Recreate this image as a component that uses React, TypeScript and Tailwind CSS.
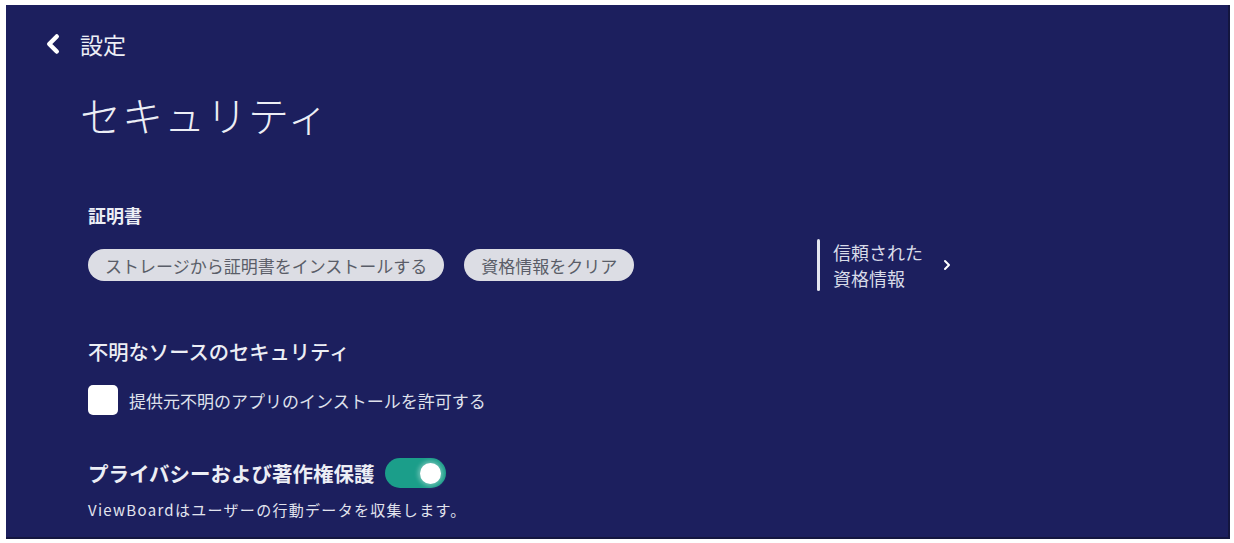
import { ChevronLeft, ChevronRight } from 'lucide-react'

const font = { fontFamily: '"Noto Sans CJK JP", "Noto Sans", sans-serif' }

function Pill({ label }: { label: string }) {
  return (
    <button className="h-[32px] px-[17px] rounded-full bg-[#dcdde4] text-[#5a5d68] text-[17px] leading-none">
      {label}
    </button>
  )
}

export default function App() {
  return (
    <div className="w-[1234px] h-[543px] bg-white pt-[5px] pl-[6px] pr-[4px] pb-[4px]" style={font}>
      <div className="w-full h-full bg-[#1c1f5e] text-[#eceef5] shadow-[inset_-2px_-2px_0_#14163f] overflow-hidden">
        {/* header */}
        <div className="flex items-center pt-[24px] pl-[32px]">
          <ChevronLeft className="w-[30px] h-[30px] text-white" strokeWidth={3.6} />
          <span className="ml-[12px] text-[23px] leading-none">設定</span>
        </div>
        <h1 className="mt-[35px] ml-[74px] text-[41px] leading-none font-light tracking-[1px]">セキュリティ</h1>

        <div className="pl-[82px]">
          {/* certificates */}
          <div className="mt-[71px] text-[18px] leading-none font-bold">証明書</div>
          <div className="mt-[15px] flex items-center">
            <div className="w-[729px] flex items-center gap-[20px]">
              <Pill label="ストレージから証明書をインストールする" />
              <Pill label="資格情報をクリア" />
            </div>
            <div className="flex items-center">
              <div className="w-[3px] h-[52px] bg-[#e4e6f0] rounded-full" />
              <div className="ml-[13px] text-[18px] leading-[26px] text-[#d8dbe8]">
                <div>信頼された</div>
                <div>資格情報</div>
              </div>
              <ChevronRight className="ml-[16px] w-[16px] h-[16px] text-white" strokeWidth={3} />
            </div>
          </div>

          {/* unknown sources */}
          <div className="mt-[50px] text-[20.3px] leading-none font-medium">不明なソースのセキュリティ</div>
          <label className="mt-[24px] flex items-center">
            <span className="w-[30px] h-[30px] rounded-[5px] bg-white" />
            <span className="ml-[11px] text-[17px] leading-none text-[#dfe1ec]">提供元不明のアプリのインストールを許可する</span>
          </label>

          {/* privacy */}
          <div className="mt-[43px] flex items-center">
            <span className="text-[20.5px] leading-none font-bold">プライバシーおよび著作権保護</span>
            <span className="ml-[10px] w-[61px] h-[30px] rounded-full bg-[#1b9e8a] flex items-center justify-end pr-[5px]">
              <span className="w-[21px] h-[21px] rounded-full bg-white shadow-[0_0_4px_2px_rgba(255,255,255,0.35)]" />
            </span>
          </div>
          <div className="mt-[14px] text-[15px] leading-none tracking-[1.3px] text-[#e2e4ee]">ViewBoardはユーザーの行動データを収集します。</div>
        </div>
      </div>
    </div>
  )
}
